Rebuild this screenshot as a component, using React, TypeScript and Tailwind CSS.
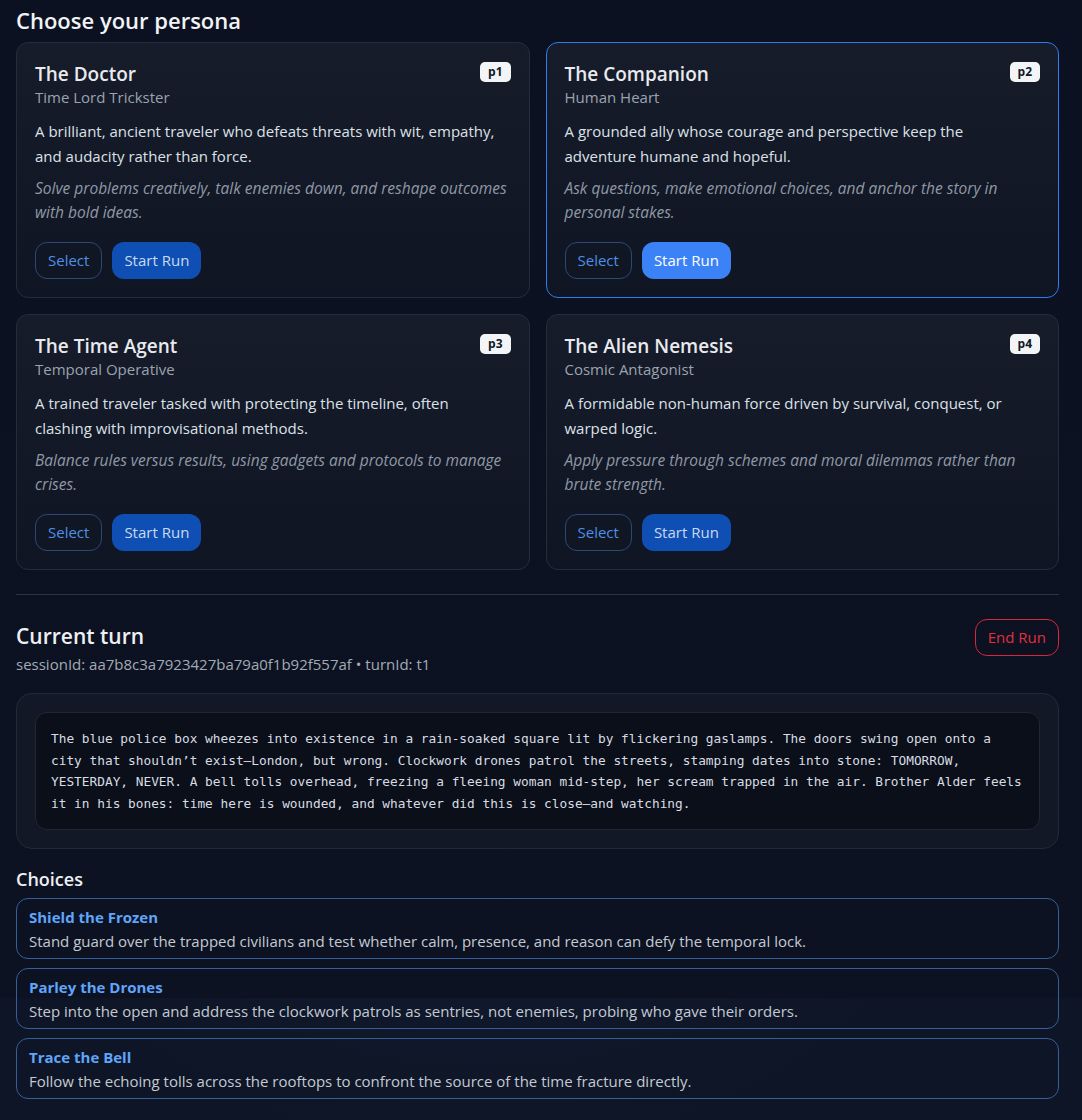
import React from 'react';

interface Persona {
  id: string;
  name: string;
  role: string;
  summary: string;
  play: string;
}

const personas: Persona[] = [
  {
    id: 'p1',
    name: 'The Doctor',
    role: 'Time Lord Trickster',
    summary: 'A brilliant, ancient traveler who defeats threats with wit, empathy, and audacity rather than force.',
    play: 'Solve problems creatively, talk enemies down, and reshape outcomes with bold ideas.',
  },
  {
    id: 'p2',
    name: 'The Companion',
    role: 'Human Heart',
    summary: 'A grounded ally whose courage and perspective keep the adventure humane and hopeful.',
    play: 'Ask questions, make emotional choices, and anchor the story in personal stakes.',
  },
  {
    id: 'p3',
    name: 'The Time Agent',
    role: 'Temporal Operative',
    summary: 'A trained traveler tasked with protecting the timeline, often clashing with improvisational methods.',
    play: 'Balance rules versus results, using gadgets and protocols to manage crises.',
  },
  {
    id: 'p4',
    name: 'The Alien Nemesis',
    role: 'Cosmic Antagonist',
    summary: 'A formidable non-human force driven by survival, conquest, or warped logic.',
    play: 'Apply pressure through schemes and moral dilemmas rather than brute strength.',
  },
];

const choices = [
  {
    title: 'Shield the Frozen',
    text: 'Stand guard over the trapped civilians and test whether calm, presence, and reason can defy the temporal lock.',
  },
  {
    title: 'Parley the Drones',
    text: 'Step into the open and address the clockwork patrols as sentries, not enemies, probing who gave their orders.',
  },
  {
    title: 'Trace the Bell',
    text: 'Follow the echoing tolls across the rooftops to confront the source of the time fracture directly.',
  },
];

// lines kept as in the rendered narrative
const narrative = [
  'The blue police box wheezes into existence in a rain-soaked square lit by flickering gaslamps. The doors swing open onto a',
  'city that shouldn’t exist—London, but wrong. Clockwork drones patrol the streets, stamping dates into stone: TOMORROW,',
  'YESTERDAY, NEVER. A bell tolls overhead, freezing a fleeing woman mid-step, her scream trapped in the air. Brother Alder feels',
  'it in his bones: time here is wounded, and whatever did this is close—and watching.',
];

function PersonaCard({ persona, selected }: { persona: Persona; selected: boolean }) {
  return (
    <div
      className={
        selected
          ? 'rounded-xl border border-[#2f7bf0] bg-gradient-to-b from-[#161c2a] to-[#0f1522] p-[18px]'
          : 'rounded-xl border border-[#252d3b] bg-gradient-to-b from-[#161c2a] to-[#0f1522] p-[18px]'
      }
    >
      <div className="flex items-start justify-between">
        <div>
          <h3 className="mt-[1px] text-[19px] font-semibold leading-6 text-[#e8eaee]">{persona.name}</h3>
          <p className="text-[15px] leading-[22px] text-[#9ca3af]">{persona.role}</p>
        </div>
        <span className="mt-[1px] rounded-[5px] bg-[#f3f4f6] px-2 text-[12px] font-bold leading-5 text-[#111827]">
          {persona.id}
        </span>
      </div>
      <p className="mt-[11px] max-w-[463px] text-[15px] leading-[25px] text-[#dde1e7]">{persona.summary}</p>
      <p className="mt-[7px] text-[15.5px] italic leading-6 text-[#9099a6]">{persona.play}</p>
      <div className="mt-[18px] flex gap-2.5">
        <button className="h-[37px] rounded-xl border border-[#2a4a75] px-3 text-[15px] text-[#4f8fe6]">
          Select
        </button>
        <button
          className={
            selected
              ? 'h-[37px] rounded-xl bg-[#3b82f6] px-3 text-[15px] text-white'
              : 'h-[37px] rounded-xl bg-[#0f4fb4] px-3 text-[15px] text-[#c9d9f0]'
          }
        >
          Start Run
        </button>
      </div>
    </div>
  );
}

export default function App() {
  return (
    <div className="min-h-screen font-['Open_Sans',sans-serif] [background:linear-gradient(#0b1120,#0c1221)_top/100%_998px_no-repeat,radial-gradient(ellipse_at_45%_40%,#16223c,#0e1526_75%)]">
      <div className="ml-4 w-[1043px] pb-5 pt-1">
        <h1 className="text-[22px] font-semibold leading-8 text-[#f1f3f6]">Choose your persona</h1>

        <div className="mt-1.5 grid grid-cols-2 gap-4">
          {personas.map((p) => (
            <PersonaCard key={p.id} persona={p} selected={p.id === 'p2'} />
          ))}
        </div>

        <div className="mt-6 h-px bg-[#2c3445]" />

        <div className="mt-6 flex items-start justify-between">
          <div>
            <h2 className="mt-[3px] text-[21px] font-semibold leading-7 text-[#eef0f3]">Current turn</h2>
            <p className="mt-[4px] text-[15px] leading-5 text-[#a3aab5]">
              sessionId: aa7b8c3a7923427ba79a0f1b92f557af • turnId: t1
            </p>
          </div>
          <button className="h-[37px] rounded-xl border border-[#d5283a] px-3 text-[15px] text-[#e0303f]">
            End Run
          </button>
        </div>

        <div className="mt-[19px] rounded-2xl border border-[#222a38] bg-[#121826] p-[18px]">
          <pre className="whitespace-pre rounded-xl border border-[#1f2735] bg-[#0a0f1a] px-[15px] pb-[14px] pt-[15px] font-['DejaVu_Sans_Mono',monospace] text-[12.8px] leading-[21.7px] text-[#d8dce2]">
            {narrative.join('\n')}
          </pre>
        </div>

        <h2 className="mt-[17px] text-[18px] font-semibold leading-[26px] text-[#eef0f3]">Choices</h2>

        <div className="mt-1.5 flex flex-col gap-[9px]">
          {choices.map((c) => (
            <button
              key={c.title}
              className="rounded-xl border border-[#365f9a] px-3 pb-[6px] pt-[7px] text-left"
            >
              <div className="text-[15px] font-bold leading-[22px] text-[#60a5fa]">{c.title}</div>
              <div className="mt-[2px] text-[15px] leading-[22px] text-[#c4cad3]">{c.text}</div>
            </button>
          ))}
        </div>
      </div>
    </div>
  );
}
